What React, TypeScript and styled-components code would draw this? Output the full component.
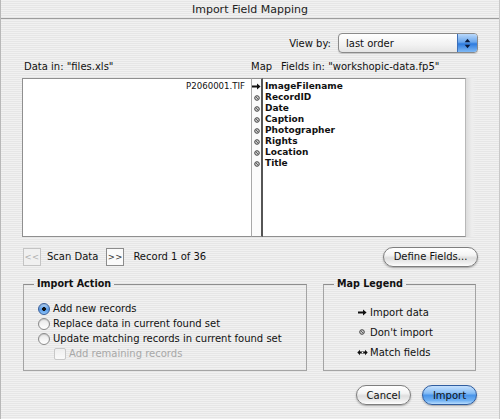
import React from "react";
import styled, { createGlobalStyle } from "styled-components";

const Global = createGlobalStyle`
  html, body { margin: 0; padding: 0; background: #ececec; }
  body { font-family: "DejaVu Sans", "Liberation Sans", sans-serif; }
  * { box-sizing: border-box; }
`;

const pin = `repeating-linear-gradient(to bottom, #f1f1f1 0px, #f1f1f1 1px, #e6e6e6 1px, #e6e6e6 2px)`;

const Window = styled.div`
  width: 500px;
  height: 419px;
  background: ${pin};
  border-left: 1px solid #b8b8b8;
  border-right: 1px solid #c8c8c8;
  display: flex;
  flex-direction: column;
  font-size: 10px;
  color: #111;
  overflow: hidden;
`;

const TitleBar = styled.div`
  height: 19px;
  flex: none;
  border-bottom: 1px solid #9c9c9c;
  display: flex;
  align-items: center;
  justify-content: center;
  font-size: 11px;
  color: #222;
  padding-top: 1px;
`;

const Body = styled.div`
  display: flex;
  flex-direction: column;
  padding: 0 21px 0 21px;
`;

const ViewByRow = styled.div`
  margin-top: 14px;
  height: 20px;
  display: flex;
  justify-content: flex-end;
  align-items: center;
  gap: 7px;
`;

const Label = styled.span`
  font-size: 10px;
`;

const Popup = styled.div`
  width: 140px;
  height: 20px;
  border: 1px solid #8a8a8a;
  border-radius: 4px;
  background: linear-gradient(to bottom, #ffffff, #f2f2f2 60%, #e4e4e4);
  display: flex;
  align-items: center;
  overflow: hidden;
  box-shadow: 0 1px 1px rgba(0,0,0,0.15);
`;

const PopupText = styled.span`
  flex: 1;
  padding-left: 7px;
  font-size: 10px;
`;

const PopupCap = styled.div`
  width: 20px;
  height: 100%;
  background: linear-gradient(to bottom, #b9d8fb 0%, #6aa6ec 45%, #2e7bde 55%, #7fb9f5 100%);
  border-left: 1px solid #3d6fb8;
  display: flex;
  align-items: center;
  justify-content: center;
`;

const HeaderRow = styled.div`
  margin-top: 7px;
  height: 13px;
  display: flex;
  align-items: center;
  font-size: 10px;
`;

const HeadLeft = styled.span`
  width: 229px;
  padding-left: 2px;
`;

const HeadMap = styled.span`
  width: 30px;
`;

const Table = styled.div`
  margin-top: 5px;
  height: 159px;
  display: flex;
`;

const LeftList = styled.div`
  width: 230px;
  background: #ffffff;
  border: 1px solid #8f8f8f;
  border-right-color: #a8a8a8;
  padding: 2px 6px 0 0;
  display: flex;
  flex-direction: column;
  align-items: flex-end;
`;

const MapCol = styled.div`
  width: 11px;
  background: #fbfbfb;
  border-top: 1px solid #8f8f8f;
  border-bottom: 1px solid #8f8f8f;
  border-right: 2px solid #555;
  padding-top: 2px;
  display: flex;
  flex-direction: column;
  align-items: center;
`;

const RightList = styled.div`
  width: 203px;
  background: #ffffff;
  border: 1px solid #8f8f8f;
  border-left: none;
  border-right-color: #b8b8b8;
  padding: 2px 0 0 2px;
  display: flex;
  flex-direction: column;
`;

const Gutter = styled.div`
  width: 10px;
  background: linear-gradient(to right, #dcdcdc, #eeeeee 60%, rgba(240,240,240,0));
`;

const Row = styled.div<{ $bold?: boolean }>`
  height: 11px;
  line-height: 11px;
  font-size: ${(p) => (p.$bold ? 9 : 8.6)}px;
  font-weight: ${(p) => (p.$bold ? 700 : 400)};
  display: flex;
  align-items: center;
  white-space: nowrap;
`;

const ScanRow = styled.div`
  margin-top: 9px;
  height: 21px;
  display: flex;
  align-items: center;
  padding-left: 1px;
`;

const SmallBtn = styled.div<{ $disabled?: boolean }>`
  width: 18px;
  height: 18px;
  border: 1px solid ${(p) => (p.$disabled ? "#c4c4c4" : "#8c8c8c")};
  background: ${(p) => (p.$disabled ? "#f0f0f0" : "#fafafa")};
  color: ${(p) => (p.$disabled ? "#b0b0b0" : "#333")};
  font-size: 8.5px;
  display: flex;
  align-items: center;
  justify-content: center;
  letter-spacing: 0.5px;
`;

const ScanText = styled.span<{ $gap: number }>`
  margin-left: ${(p) => p.$gap}px;
  font-size: 10px;
`;

const Spacer = styled.div`
  flex: 1;
`;

const PillButton = styled.div<{ $w: number; $default?: boolean }>`
  width: ${(p) => p.$w}px;
  height: 20px;
  border-radius: 10px;
  border: 1px solid ${(p) => (p.$default ? "#2f5c9e" : "#7e7e7e")};
  background: ${(p) =>
    p.$default
      ? "linear-gradient(to bottom, #c5e0fd 0%, #86bdf5 40%, #4a95ea 52%, #6fb0f2 80%, #b7dcfd 100%)"
      : "linear-gradient(to bottom, #ffffff 0%, #f4f4f4 40%, #dedede 55%, #f0f0f0 85%, #ffffff 100%)"};
  box-shadow: 0 1px 2px rgba(0, 0, 0, 0.3);
  display: flex;
  align-items: center;
  justify-content: center;
  font-size: 10px;
  color: #111;
`;

const Groups = styled.div`
  margin-top: 11px;
  display: flex;
  gap: 16px;
  padding-left: 1px;
`;

const GroupBox = styled.fieldset<{ $w: number }>`
  width: ${(p) => p.$w}px;
  height: 93px;
  margin: 0;
  border: 1px solid #a4a4a4;
  border-top-color: #8e8e8e;
  padding: 0;
  display: flex;
  flex-direction: column;
`;

const GroupTitle = styled.legend`
  margin-left: 10px;
  padding: 0 3px;
  font-weight: 700;
  font-size: 9.6px;
  line-height: 12px;
`;

const RadioList = styled.div`
  padding: 11px 0 0 14px;
  display: flex;
  flex-direction: column;
`;

const OptRow = styled.div<{ $indent?: number; $disabled?: boolean }>`
  height: 15px;
  display: flex;
  align-items: center;
  gap: 3px;
  padding-left: ${(p) => p.$indent || 0}px;
  font-size: 10px;
  color: ${(p) => (p.$disabled ? "#a8a8a8" : "#111")};
`;

const Radio = styled.span<{ $on?: boolean }>`
  width: 12px;
  height: 12px;
  border-radius: 50%;
  flex: none;
  border: 1px solid ${(p) => (p.$on ? "#3a5f9a" : "#8a8a8a")};
  background: ${(p) =>
    p.$on
      ? "radial-gradient(circle at 50% 50%, #111 0 1.6px, transparent 2.2px), linear-gradient(to bottom, #b8d9fc, #5a9ce8 55%, #8cc2f8)"
      : "linear-gradient(to bottom, #e8e8e8, #ffffff)"};
  box-shadow: inset 0 1px 1px rgba(0,0,0,0.15);
`;

const Check = styled.span`
  width: 12px;
  height: 12px;
  flex: none;
  border: 1px solid #c8c8c8;
  border-radius: 2px;
  background: linear-gradient(to bottom, #eeeeee, #fafafa);
`;

const LegendList = styled.div`
  padding: 16px 0 0 31px;
  display: flex;
  flex-direction: column;
  gap: 8px;
`;

const LegendRow = styled.div`
  height: 12px;
  display: flex;
  align-items: center;
  font-size: 10px;
`;

const IconSlot = styled.span`
  width: 14px;
  display: flex;
  justify-content: center;
  margin-right: 1px;
`;

const Footer = styled.div`
  margin-top: 14px;
  display: flex;
  justify-content: flex-end;
  gap: 11px;
  padding-right: 1px;
`;

const Arrow = () => (
  <svg width="9" height="7" viewBox="0 0 9 7">
    <path d="M0 2.5 H5 V0.5 L8.6 3.5 L5 6.5 V4.5 H0 Z" fill="#111" />
  </svg>
);

const NoImport = () => (
  <svg width="6" height="6" viewBox="0 0 6 6">
    <circle cx="3" cy="3" r="2.3" fill="#d0d0d0" stroke="#444" strokeWidth="1" />
    <path d="M1.8 1.8 L4.2 4.2" stroke="#555" strokeWidth="0.9" />
  </svg>
);

const Match = () => (
  <svg width="11" height="7" viewBox="0 0 11 7">
    <path d="M0.3 3.5 L3 0.8 V2.6 H8 V0.8 L10.7 3.5 L8 6.2 V4.4 H3 V6.2 Z" fill="#111" />
    <circle cx="5.5" cy="3.5" r="0.8" fill="#fff" />
  </svg>
);

const Updown = () => (
  <svg width="7" height="11" viewBox="0 0 7 11">
    <path d="M3.5 0.8 L6.3 4.3 H0.7 Z" fill="#0a1a3a" />
    <path d="M3.5 10.2 L6.3 6.7 H0.7 Z" fill="#0a1a3a" />
  </svg>
);

const fields = ["ImageFilename", "RecordID", "Date", "Caption", "Photographer", "Rights", "Location", "Title"];

export default function App() {
  return (
    <>
      <Global />
      <Window>
        <TitleBar>Import Field Mapping</TitleBar>
        <Body>
          <ViewByRow>
            <Label>View by:</Label>
            <Popup>
              <PopupText>last order</PopupText>
              <PopupCap>
                <Updown />
              </PopupCap>
            </Popup>
          </ViewByRow>
          <HeaderRow>
            <HeadLeft>Data in: "files.xls"</HeadLeft>
            <HeadMap>Map</HeadMap>
            <span>Fields in: "workshopic-data.fp5"</span>
          </HeaderRow>
          <Table>
            <LeftList>
              <Row>P2060001.TIF</Row>
            </LeftList>
            <MapCol>
              {fields.map((f, i) => (
                <Row key={f}>{i === 0 ? <Arrow /> : <NoImport />}</Row>
              ))}
            </MapCol>
            <RightList>
              {fields.map((f) => (
                <Row key={f} $bold>
                  {f}
                </Row>
              ))}
            </RightList>
            <Gutter />
          </Table>
          <ScanRow>
            <SmallBtn $disabled>&lt;&lt;</SmallBtn>
            <ScanText $gap={6}>Scan Data</ScanText>
            <ScanText $gap={8} as="div">
              <SmallBtn>&gt;&gt;</SmallBtn>
            </ScanText>
            <ScanText $gap={9}>Record 1 of 36</ScanText>
            <Spacer />
            <PillButton $w={95}>Define Fields...</PillButton>
          </ScanRow>
          <Groups>
            <GroupBox $w={284}>
              <GroupTitle>Import Action</GroupTitle>
              <RadioList>
                <OptRow>
                  <Radio $on />
                  Add new records
                </OptRow>
                <OptRow>
                  <Radio />
                  Replace data in current found set
                </OptRow>
                <OptRow>
                  <Radio />
                  Update matching records in current found set
                </OptRow>
                <OptRow $indent={16} $disabled>
                  <Check />
                  Add remaining records
                </OptRow>
              </RadioList>
            </GroupBox>
            <GroupBox $w={153}>
              <GroupTitle>Map Legend</GroupTitle>
              <LegendList>
                <LegendRow>
                  <IconSlot>
                    <Arrow />
                  </IconSlot>
                  Import data
                </LegendRow>
                <LegendRow>
                  <IconSlot>
                    <NoImport />
                  </IconSlot>
                  Don't import
                </LegendRow>
                <LegendRow>
                  <IconSlot>
                    <Match />
                  </IconSlot>
                  Match fields
                </LegendRow>
              </LegendList>
            </GroupBox>
          </Groups>
          <Footer>
            <PillButton $w={55}>Cancel</PillButton>
            <PillButton $w={55} $default>
              Import
            </PillButton>
          </Footer>
        </Body>
      </Window>
    </>
  );
}
